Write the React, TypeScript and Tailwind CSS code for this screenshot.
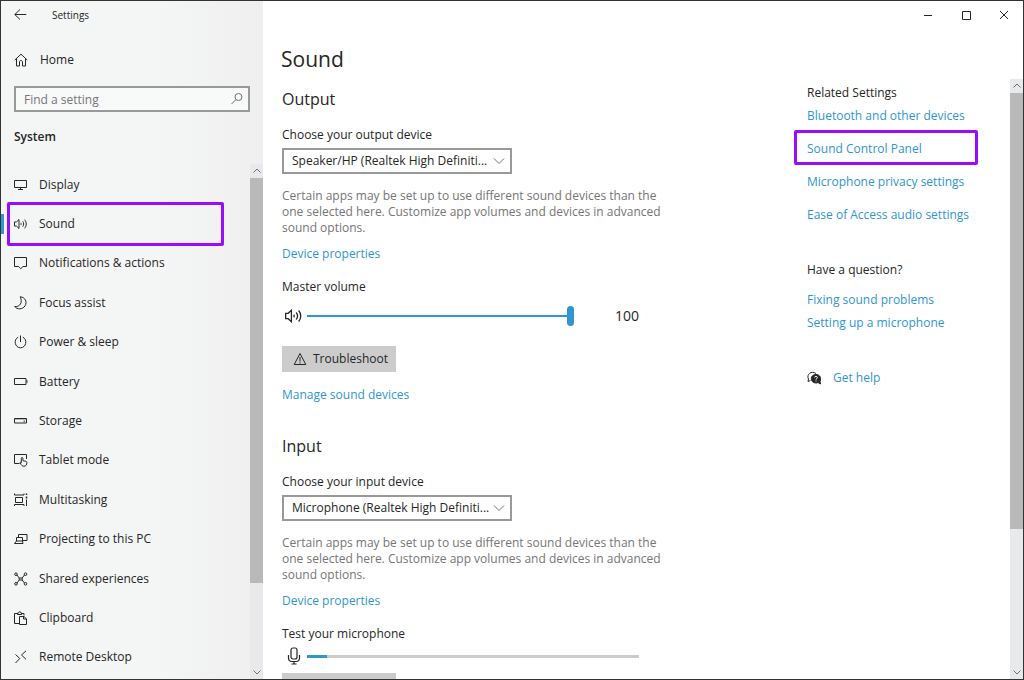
import { useState, type ReactNode } from "react";

type IconProps = {
  children: ReactNode;
  className?: string;
  box?: number;
};

function Icon({ children, className = "w-3.5 h-3.5", box = 14 }: IconProps) {
  return (
    <svg
      viewBox={`0 0 ${box} ${box}`}
      className={`shrink-0 ${className}`}
      fill="none"
      stroke="currentColor"
      strokeWidth="1"
      aria-hidden="true"
    >
      {children}
    </svg>
  );
}

const speaker = (
  <>
    <path d="M.5 4.9h2L5 2.5v9L2.5 9.1h-2z" />
    <path d="M6.8 5.9c.5.7.5 1.6 0 2.2M8.7 4.3c1.3 1.6 1.3 3.8 0 5.4M10.6 2.7c2.2 2.5 2.2 6.1 0 8.6" />
  </>
);

type NavItem = {
  label: string;
  icon: ReactNode;
};

const navItems: NavItem[] = [
  {
    label: "Display",
    icon: <path d="M.5 2.5h12v7H.5zM6.5 9.5v2M4 11.5h5" />,
  },
  { label: "Sound", icon: speaker },
  {
    label: "Notifications & actions",
    icon: <path d="M.5 1.5h12v9H9l-2.2 2.2-2.2-2.2H.5z" />,
  },
  {
    label: "Focus assist",
    icon: <path d="M6.2.8c5 .3 7.3 5.3 4.8 9.1-2.500 3.700-7.900 3.900-10.300.6 5.500.7 8.100-4.200 5.500-9.700z" />,
  },
  {
    label: "Power & sleep",
    icon: <path d="M6.5.5v6.500M4.200 2.200C-.8 4.500.8 12.800 6.500 12.800S13.800 4.500 8.800 2.200" />,
  },
  {
    label: "Battery",
    icon: <path d="M.5 3.5h11.500v6H.5zM13 5.300v2.400" />,
  },
  {
    label: "Storage",
    icon: (
      <>
        <path d="M.5 4.5h12v4.500H.5zM9.500 7.200h1.500" />
        <path d="M.5 5.5h12" strokeOpacity=".3" />
      </>
    ),
  },
  {
    label: "Tablet mode",
    icon: (
      <>
        <path d="M5.5 10.5H.5v-9h12v4.500M3 12.500" />
        <path d="M7.300 9.800V5.300c0-1.100 1.600-1.100 1.600 0v2.400l3 .6c.7.200 1 .6 1 1.200 0 2.200-.9 3.700-3 3.700-1.700 0-2.500-1-3.800-3.300-.3-.7.500-1.100 1.200-.1z" />
      </>
    ),
  },
  {
    label: "Multitasking",
    icon: (
      <>
        <path d="M1.5 4.5h7v5h-7z" />
        <path d="M.5.5v1.500h9.500V.5M.5 13v-1.500h9.500V13M12.500 6.500V13" />
        <path d="M12.500.5v1.500M12.500 3.500v2" strokeWidth="1.500" />
      </>
    ),
  },
  {
    label: "Projecting to this PC",
    icon: <path d="M4.5 5V2.500h8.500v6H9M2.500 5.500h6v3.500h-6zM2.500 9l-2 2.500h8.500l-.5-2.500" />,
  },
  {
    label: "Shared experiences",
    icon: (
      <>
        <path d="M2.800 2.800l2.400 3.200h3l2.400-3.200M2.800 11.200L5.200 8h3l2.400 3.200M5.200 6v2M8.200 6v2" />
        <circle cx="2" cy="2.200" r="1.300" />
        <circle cx="11.500" cy="2.200" r="1.300" />
        <circle cx="2" cy="11.800" r="1.300" />
        <circle cx="11.500" cy="11.800" r="1.300" />
      </>
    ),
  },
  {
    label: "Clipboard",
    icon: (
      <>
        <path d="M5 12.500H.5v-10h3M7.500 2.500h2.500v2M3.500 3.500v-1.500h1.200c0-2 2-2 2 0h1v1.500z" />
        <path d="M5.500 5.500h4.500l2.500 2.300v5.700h-7zM9.500 5.500v2.500h3" />
      </>
    ),
  },
  {
    label: "Remote Desktop",
    icon: <path d="M1.500 4.500l4.300 4-4.300 4.500M12 .8L7.500 5l4.500 4.300" />,
  },
];

const relatedLinks = [
  "Bluetooth and other devices",
  "Sound Control Panel",
  "Microphone privacy settings",
  "Ease of Access audio settings",
];

const helpLinks = ["Fixing sound problems", "Setting up a microphone"];

const hint =
  "Certain apps may be set up to use different sound devices than the one selected here. Customize app volumes and devices in advanced sound options.";

function Link({ children }: { children: ReactNode }) {
  return (
    <a href="#" className="text-[#2f96cf] hover:text-gray-500 whitespace-nowrap">
      {children}
    </a>
  );
}

function Highlight({ className }: { className: string }) {
  return (
    <span
      className={`absolute pointer-events-none border-3 border-[#9b0cff] rounded-xs ${className}`}
    />
  );
}

function ScrollBar({ thumb, rest }: { thumb: number; rest: number }) {
  return (
    <div className="flex flex-col w-[13px] shrink-0 bg-[#e8e9ea] text-gray-500">
      <button aria-label="Scroll up" className="flex h-3.5 items-center justify-center">
        <Icon className="w-2.5 h-2.5" box={10}>
          <path d="M1.500 6.500L5 3l3.500 3.500" />
        </Icon>
      </button>
      <div className="bg-[#b9b9b9]" style={{ flexGrow: thumb }} />
      <div style={{ flexGrow: rest }} />
      <button aria-label="Scroll down" className="flex h-3.5 items-center justify-center">
        <Icon className="w-2.5 h-2.5" box={10}>
          <path d="M1.500 3.500L5 7l3.500-3.500" />
        </Icon>
      </button>
    </div>
  );
}

function DeviceSelect({ id, label, device }: { id: string; label: string; device: string }) {
  return (
    <>
      <label htmlFor={id} className="block mt-4">
        {label}
      </label>
      <div className="relative mt-[5px] w-[230px]">
        <select
          id={id}
          className="block w-full h-[26px] appearance-none border-2 border-[#999] bg-white pl-2 pr-5 leading-4 whitespace-nowrap"
        >
          <option>{device}</option>
        </select>
        <Icon className="absolute right-1.5 top-1.5 w-3.5 h-3.5 text-gray-500 pointer-events-none">
          <path d="M2 4.500l5 5 5-5" />
        </Icon>
      </div>
      <p className="mt-3.5 text-[#767676]">{hint}</p>
      <p className="mt-2.5">
        <Link>Device properties</Link>
      </p>
    </>
  );
}

function Sidebar() {
  const [active, setActive] = useState("Sound");

  return (
    <aside className="flex flex-col w-[262px] shrink-0 bg-linear-to-r from-[#f4f5f5] from-60% to-[#efefef]">
      <header className="flex h-[27px] items-center pl-[13px] gap-6 text-[10px]">
        <button aria-label="Back">
          <Icon>
            <path d="M6 1.500L.8 6.500 6 11.500M.8 6.500h11.500" />
          </Icon>
        </button>
        <span>Settings</span>
      </header>
      <a href="#" className="flex items-center gap-3 mt-5 pl-[13px] h-6">
        <Icon>
          <path d="M.8 7L7 1.200 13.200 7M2.500 5.500v7.500h3V9c0-2 3-2 3 0v4h3V5.500" />
        </Icon>
        Home
      </a>
      <div className="relative mx-[13px] mt-3.5">
        <input
          type="text"
          aria-label="Find a setting"
          placeholder="Find a setting"
          className="block w-full h-[26px] border-2 border-[#999] bg-[#f8f9f9] pl-2 pr-7 placeholder:text-[#767676]"
        />
        <Icon className="absolute right-1.5 top-1.5 w-3.5 h-3.5 text-gray-500 pointer-events-none">
          <circle cx="8.500" cy="5" r="3.500" />
          <path d="M6 7.500L1.500 12" />
        </Icon>
      </div>
      <h2 className="mt-[17px] pl-[13px] font-semibold">System</h2>
      <div className="flex flex-1 min-h-0 mt-[19px]">
        <nav className="flex-1 pt-px pb-0.5">
          <ul className="flex flex-col h-full">
            {navItems.map(({ label, icon }) => (
              <li key={label} className="relative flex flex-1 items-center">
                {active === label && (
                  <>
                    <span className="absolute left-0 w-[3px] h-5 bg-[#2f96cf]" />
                    <Highlight className="left-1.5 right-[26px] -inset-y-0.5" />
                  </>
                )}
                <button
                  onClick={() => setActive(label)}
                  className="flex flex-1 items-center gap-[11px] pl-[13px] text-left"
                >
                  <Icon>{icon}</Icon>
                  {label}
                </button>
              </li>
            ))}
          </ul>
        </nav>
        <ScrollBar thumb={406} rest={82} />
      </div>
    </aside>
  );
}

function WindowControls() {
  return (
    <div className="flex h-7 items-center justify-end gap-6 pr-3">
      <button aria-label="Minimize">
        <Icon>
          <path d="M3 7.500h8" />
        </Icon>
      </button>
      <button aria-label="Maximize">
        <Icon>
          <path d="M3.500 3.500h8v8h-8z" />
        </Icon>
      </button>
      <button aria-label="Close">
        <Icon>
          <path d="M3 3l8 8M11 3l-8 8" />
        </Icon>
      </button>
    </div>
  );
}

function SoundSettings() {
  const [volume, setVolume] = useState(100);

  return (
    <div className="w-96 shrink-0">
      <section>
        <h2 className="mt-2 text-base leading-6">Output</h2>
        <DeviceSelect
          id="output"
          label="Choose your output device"
          device="Speaker/HP (Realtek High Definiti..."
        />
        <label htmlFor="volume" className="block mt-[17px]">
          Master volume
        </label>
        <div className="flex items-center mt-[11px] h-5 pl-[3px] pr-[27px]">
          <Icon className="w-[18px] h-[18px]">{speaker}</Icon>
          <input
            id="volume"
            type="range"
            min={0}
            max={100}
            value={volume}
            onChange={(e) => setVolume(Number(e.target.value))}
            className="ml-1 w-[267px] h-5 appearance-none bg-transparent [&::-webkit-slider-runnable-track]:h-0.5 [&::-webkit-slider-runnable-track]:bg-[#2f96cf] [&::-webkit-slider-thumb]:appearance-none [&::-webkit-slider-thumb]:w-[7px] [&::-webkit-slider-thumb]:h-5 [&::-webkit-slider-thumb]:-mt-[9px] [&::-webkit-slider-thumb]:rounded [&::-webkit-slider-thumb]:bg-[#2f96cf]"
          />
          <output htmlFor="volume" className="ml-auto text-sm">
            {volume}
          </output>
        </div>
        <button className="flex items-center gap-1.5 mt-5 h-[26px] w-[114px] pl-[11px] bg-[#ccc]">
          <Icon>
            <path d="M7 1.500L12.800 12.500H1.200zM7 5v4.500M7 10.300v1.200" />
          </Icon>
          Troubleshoot
        </button>
        <p className="mt-[15px]">
          <Link>Manage sound devices</Link>
        </p>
      </section>
      <section className="mt-[31px]">
        <h2 className="text-base leading-6">Input</h2>
        <DeviceSelect
          id="input"
          label="Choose your input device"
          device="Microphone (Realtek High Definiti..."
        />
        <h3 className="mt-[17px]">Test your microphone</h3>
        <div className="flex items-center gap-1 mt-1 h-5 pl-[3px] pr-[27px]">
          <Icon className="w-[18px] h-[18px]" box={18}>
            <rect x="6" y="1" width="6" height="11" rx="2" strokeWidth="1.200" />
            <path d="M3.500 8v3c0 2.500 1.500 3.500 3.500 3.500h4c2 0 3.500-1 3.500-3.500V8M9 14.500V17M6.500 17h5" strokeWidth="1.200" />
          </Icon>
          <div
            role="progressbar"
            aria-label="Microphone level"
            aria-valuenow={6}
            className="flex-1 h-[3px] bg-[#ccc]"
          >
            <div className="h-full w-[6%] bg-[#2f96cf]" />
          </div>
        </div>
        <button aria-label="Troubleshoot microphone" className="block mt-[7px] h-[26px] w-[114px] bg-[#ccc]" />
      </section>
    </div>
  );
}

function RelatedSettings() {
  return (
    <aside className="w-[203px] shrink-0 pt-1.5">
      <h3>Related Settings</h3>
      <ul className="flex flex-col gap-[17px] mt-[7px]">
        {relatedLinks.map((label) => (
          <li key={label} className="relative">
            <Link>{label}</Link>
            {label === "Sound Control Panel" && (
              <Highlight className="-left-[13px] right-8 -top-[11px] -bottom-2" />
            )}
          </li>
        ))}
      </ul>
      <h3 className="mt-[39px]">Have a question?</h3>
      <ul className="flex flex-col gap-[7px] mt-3.5">
        {helpLinks.map((label) => (
          <li key={label}>
            <Link>{label}</Link>
          </li>
        ))}
      </ul>
      <div className="flex items-center gap-3 mt-[39px]">
        <Icon>
          <path d="M3.500 9.500L1 10.500l.5-2.500C-1 3.500 4.500-.8 9 2.500" />
          <path
            d="M9 3.500c-3 0-4.700 2-4.700 4.200S6 12 9 12c.8 0 1.500-.2 2-.5l2.500 1.500-.5-2.800c2-3.200-.5-6.700-4-6.700z"
            fill="currentColor"
          />
          <path d="M7.700 6.500c0-1.600 2.600-1.600 2.600 0 0 1-1.300 1-1.300 2.200M9 9.500v1" stroke="white" />
        </Icon>
        <Link>Get help</Link>
      </div>
    </aside>
  );
}

function App() {
  return (
    <div className="flex h-screen overflow-hidden border border-[#333] bg-white text-[#262626] text-xs leading-4 font-['Open_Sans','Noto_Sans',sans-serif]">
      <Sidebar />
      <main className="flex flex-col flex-1 min-w-0">
        <WindowControls />
        <h1 className="mt-3 mb-0.5 h-9 pl-[18px] text-[21px] leading-9">Sound</h1>
        <div className="flex flex-1 min-h-0">
          <div className="flex flex-1 justify-between min-w-0 pl-[19px] overflow-hidden">
            <SoundSettings />
            <RelatedSettings />
          </div>
          <ScrollBar thumb={436} rest={136} />
        </div>
      </main>
    </div>
  );
}

export default App;
